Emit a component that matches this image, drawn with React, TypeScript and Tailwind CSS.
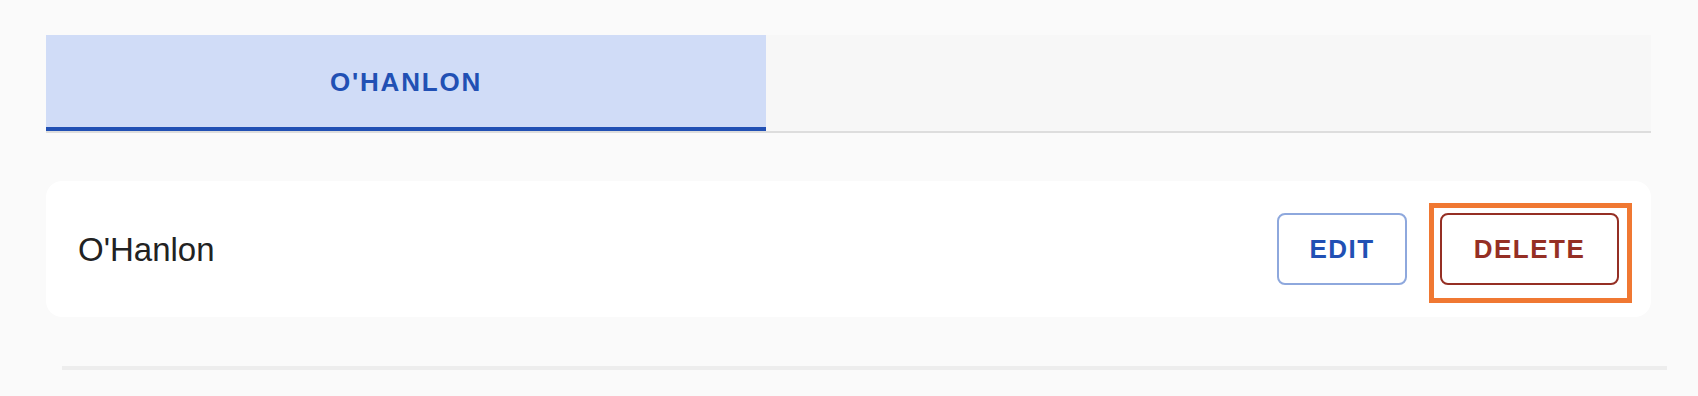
import React from "react";

export default function App() {
  return (
    <div className="w-[1698px] h-[396px] bg-[#fafafa] pt-[35px] pl-[46px] pr-[47px] font-['Liberation_Sans',Arial,sans-serif] overflow-hidden">
      <div className="flex bg-[#f7f7f7] border-b-2 border-[#dddddd]">
        <div className="w-[720px] h-[96px] bg-[#d0dcf7] border-b-4 border-[#2150b4] flex items-center justify-center">
          <span className="text-[26px] font-bold tracking-[1.8px] text-[#2150b4] leading-none pt-[2px]">
            O'HANLON
          </span>
        </div>
      </div>
      <div className="mt-[48px] h-[136px] bg-white rounded-[16px] pl-[32px] pr-[32px] flex items-center justify-between">
        <span className="text-[33px] text-[#222222] leading-none">O'Hanlon</span>
        <div className="flex items-center gap-[33px]">
          <button className="w-[130px] h-[72px] border-2 border-[#8ea8dd] rounded-[8px] bg-white flex items-center justify-center text-[26px] font-bold tracking-[1.5px] text-[#2150b4] leading-none">
            EDIT
          </button>
          <button className="relative w-[179px] h-[72px] border-2 border-[#952f24] rounded-[8px] bg-white flex items-center justify-center text-[26px] font-bold tracking-[1.5px] text-[#952f24] leading-none outline-none">
            DELETE
            <span className="pointer-events-none absolute left-[-13px] right-[-15px] top-[-12px] bottom-[-20px] border-[5px] border-[#f07832]" />
          </button>
        </div>
      </div>
      <div className="mt-[49px] ml-[16px] w-[1605px] h-[4px] bg-[#ededed]" />
    </div>
  );
}
